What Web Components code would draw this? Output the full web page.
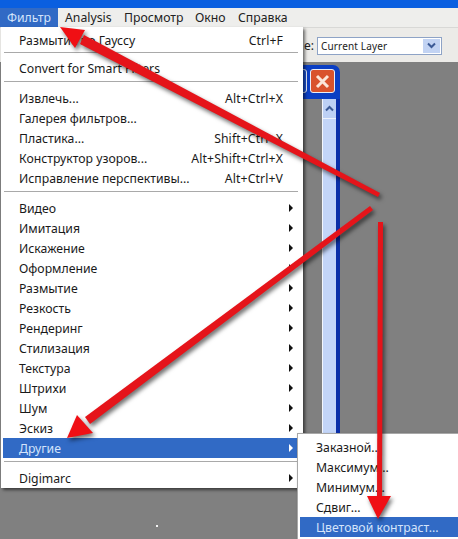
<!DOCTYPE html>
<html lang="ru">
<head>
<meta charset="utf-8">
<title>Фильтр</title>
<style>
  html, body { margin: 0; padding: 0; }
  body { width: 458px; height: 539px; overflow: hidden; font: 12.25px "Noto Sans", "Liberation Sans", sans-serif; color: #111; }
</style>
</head>
<body>
<ps-app>
  <ps-menubar>
    <ps-menubar-item active>Фильтр</ps-menubar-item>
    <ps-menubar-item style="width:59px">Analysis</ps-menubar-item>
    <ps-menubar-item style="width:71px">Просмотр</ps-menubar-item>
    <ps-menubar-item style="width:43px">Окно</ps-menubar-item>
    <ps-menubar-item>Справка</ps-menubar-item>
  </ps-menubar>
  <ps-options></ps-options>
  <ps-workspace>
    <ps-window></ps-window>
    <ps-menu class="main">
      <ps-item shortcut="Ctrl+F">Размытие по Гауссу</ps-item>
      <ps-sep first></ps-sep>
      <ps-item>Convert for Smart Filters</ps-item>
      <ps-sep></ps-sep>
      <ps-item shortcut="Alt+Ctrl+X">Извлечь...</ps-item>
      <ps-item>Галерея фильтров...</ps-item>
      <ps-item shortcut="Shift+Ctrl+X">Пластика...</ps-item>
      <ps-item shortcut="Alt+Shift+Ctrl+X">Конструктор узоров...</ps-item>
      <ps-item shortcut="Alt+Ctrl+V">Исправление перспективы...</ps-item>
      <ps-sep></ps-sep>
      <ps-item sub>Видео</ps-item>
      <ps-item sub>Имитация</ps-item>
      <ps-item sub>Искажение</ps-item>
      <ps-item sub>Оформление</ps-item>
      <ps-item sub>Размытие</ps-item>
      <ps-item sub>Резкость</ps-item>
      <ps-item sub>Рендеринг</ps-item>
      <ps-item sub>Стилизация</ps-item>
      <ps-item sub>Текстура</ps-item>
      <ps-item sub>Штрихи</ps-item>
      <ps-item sub>Шум</ps-item>
      <ps-item sub>Эскиз</ps-item>
      <ps-item sub active>Другие</ps-item>
      <ps-sep></ps-sep>
      <ps-item sub>Digimarc</ps-item>
    </ps-menu>
    <ps-menu class="sub">
      <ps-item>Заказной...</ps-item>
      <ps-item>Максимум...</ps-item>
      <ps-item>Минимум...</ps-item>
      <ps-item>Сдвиг...</ps-item>
      <ps-item active>Цветовой контраст...</ps-item>
    </ps-menu>
  </ps-workspace>
  <ps-arrows></ps-arrows>
</ps-app>
<script>
function define(name, css, html, init) {
  customElements.define(name, class extends HTMLElement {
    constructor() {
      super();
      this.attachShadow({ mode: 'open' });
      this.shadowRoot.innerHTML = `<style>${css}</style>${html}`;
      if (init) init(this);
    }
  });
}

define('ps-app', `
  :host { display: flex; flex-direction: column; position: relative; width: 458px; height: 539px; overflow: hidden;
    background: #f0efec; border-top: 8px solid #0a5fe0; box-sizing: border-box; }
`, `<slot></slot>`);

define('ps-menubar', `
  :host { display: flex; height: 19px; background: #eeeeec; flex: none; }
`, `<slot></slot>`);

define('ps-menubar-item', `
  :host { display: block; padding: 0 0 0 7px; line-height: 20px; box-sizing: border-box; white-space: nowrap; color: #222; }
  :host([active]) { width: 58px; height: 19px; background: #316ac5; color: #d4e4fb; }
`, `<slot></slot>`);

define('ps-options', `
  :host { display: flex; align-items: center; height: 35px; flex: none; background: #ecebe8; padding: 0 0 0 304px;
    box-sizing: border-box; font-size: 10px; border-top: 1px solid #d8d8d6; color: #222; position: relative; }
  .label { width: 13px; font-size: 12px; margin-top: 1px; }
  .sel { width: 125px; height: 18px; background: #fff; border: 1px solid #8ea3c6; box-sizing: border-box;
    display: flex; align-items: center; justify-content: space-between; padding: 0 1px 0 3px; letter-spacing: .15px; margin-top: 1px; }
  .btn { width: 17px; height: 14px; background: #c2d3f3; display: flex; align-items: center; justify-content: center; }
  svg { display: block; }
`, `<span class="label">e:</span>
  <div class="sel"><span>Current Layer</span>
    <div class="btn"><svg width="9" height="7" viewBox="0 0 9 7"><path d="M1 1.5 4.5 5 8 1.5" fill="none" stroke="#3c5a96" stroke-width="2"/></svg></div>
  </div>`);

define('ps-workspace', `
  :host { display: block; position: relative; flex: 1; background: #808080; }
  .speck { position: absolute; left: 156px; top: 463px; width: 2px; height: 2px; background: #f4f4f4; }
`, `<slot></slot><div class="speck"></div>`);

define('ps-window', `
  :host { display: block; position: absolute; left: 280px; top: 3px; width: 60px; height: 480px; background: #808080; }
  .head { height: 34px; background: #0b3fc4; border-radius: 0 7px 0 0; display: flex; justify-content: flex-end; align-items: center;
    gap: 3px; padding: 0 5px 2px 0; box-sizing: border-box; }
  .max, .close { width: 25px; height: 24px; box-sizing: border-box; border: 1px solid #e8eef8; border-radius: 3px; }
  .max { background: #1f55d8; }
  .close { background: #d9532c; display: flex; align-items: center; justify-content: center; }
  .body { display: flex; justify-content: flex-end; height: 446px; }
  .scroll { width: 14px; background: #c3d5f8; border-left: 1px solid #f3f6fc; box-sizing: border-box; }
  .up { height: 19px; background: #bdd0f4; border-bottom: 1px solid #eef2fb; display: flex; align-items: center; justify-content: center; }
  .edge { width: 4px; background: #0b2fa8; }
  svg { display: block; }
`, `<div class="head"><div class="max"></div><div class="close"><svg width="15" height="15" viewBox="0 0 15 15"><path d="M2 2 13 13M13 2 2 13" stroke="#fbe6d8" stroke-width="3"/></svg></div></div>
  <div class="body"><div class="scroll"><div class="up"><svg width="9" height="7" viewBox="0 0 9 7"><path d="M1 5.5 4.5 2 8 5.5" fill="none" stroke="#3c5a96" stroke-width="2"/></svg></div></div><div class="edge"></div></div>`);

define('ps-menu', `
  :host { display: block; position: absolute; background: #fff; box-sizing: border-box; box-shadow: 2px 2px 3px rgba(0,0,0,.55); }
  :host(.main) { left: 1px; top: -35px; width: 302px; height: 461px; padding: 3px 5px 0 2px; }
  :host(.sub) { left: 297px; top: 371px; width: 170px; height: 110px; border: 1px solid #a8a8a8; padding: 3px 0 0 2px; }
`, `<slot></slot>`);

define('ps-item', `
  :host { display: flex; align-items: center; height: 20px; padding: 0 4px 0 16px; white-space: nowrap; color: #1a1a1a; position: relative; }
  :host([active]) { background: #316ac5; color: #d4e4fb; }
  .sc { margin-left: auto; margin-right: 11px; letter-spacing: .1px; }
  .arrow { position: absolute; right: 5px; top: 6px; width: 0; height: 0; border-left: 4px solid #111; border-top: 4px solid transparent; border-bottom: 4px solid transparent; }
  :host([active]) .arrow { border-left-color: #fff; }
`, `<span><slot></slot></span><span class="sc"></span><span class="arrow"></span>`, el => {
  const sc = el.getAttribute('shortcut');
  if (sc) el.shadowRoot.querySelector('.sc').textContent = sc;
  if (!el.hasAttribute('sub')) el.shadowRoot.querySelector('.arrow').style.display = 'none';
});

define('ps-sep', `
  :host { display: block; height: 10px; padding-top: 3px; box-sizing: border-box; }
  :host([first]) { height: 8px; padding-top: 2px; }
  div { height: 1px; background: #a9a9a9; margin: 0 0 0 1px; }
`, `<div></div>`);

define('ps-arrows', `
  :host { display: block; position: absolute; left: 0; top: -8px; width: 458px; height: 539px; pointer-events: none; }
  svg { display: block; filter: drop-shadow(2px 3px 2px rgba(0,0,0,.55)); }
`, `<svg width="458" height="539" viewBox="0 0 458 539" fill="#e5141a">
    <path d="M380 193 378 197 80 44 84 35Z"/>
    <path d="M60 27 85 30 75 48Z" fill="#f00f14"/>
    <path d="M370 206 373 210 90 424 85 417Z"/>
    <path d="M67 438 77 415 93 433Z" fill="#f00f14"/>
    <path d="M378 222 383 222 382 500 377 500Z"/>
    <path d="M378 519 367 496 391 496Z" fill="#f00f14"/>
  </svg>`);
</script>
</body>
</html>
